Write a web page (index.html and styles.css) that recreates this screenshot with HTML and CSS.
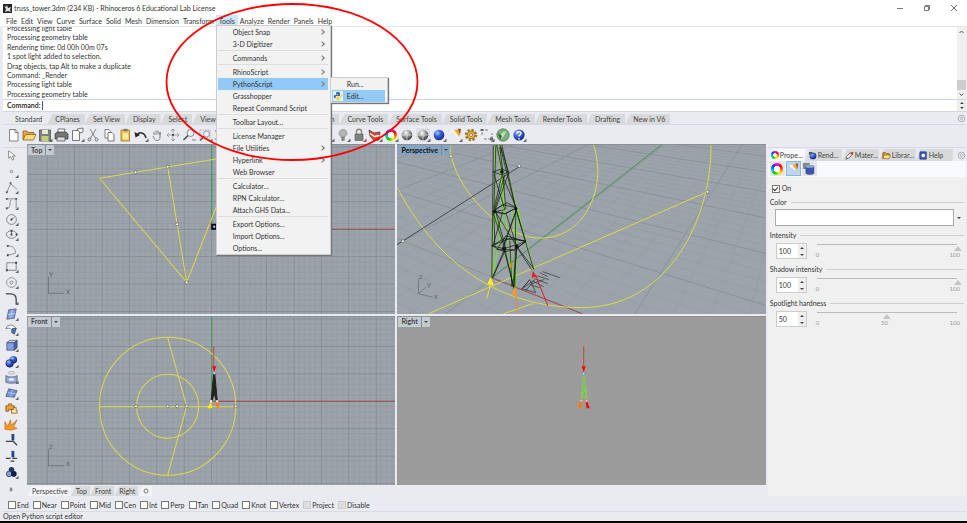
FILE: index.html
```html
<!DOCTYPE html>
<html lang="en">
<head>
<meta charset="utf-8">
<title>truss_tower.3dm - Rhinoceros 6</title>
<link rel="stylesheet" href="styles.css">
</head>
<body>
<svg class="defs" aria-hidden="true">
  <defs>
    <radialGradient id="gBlue" cx=".35" cy=".3" r=".8"><stop offset="0" stop-color="#a9c4ff"/><stop offset=".4" stop-color="#3a63d8"/><stop offset="1" stop-color="#0d1f6e"/></radialGradient>
    <radialGradient id="gGray" cx=".4" cy=".3" r=".8"><stop offset="0" stop-color="#fff"/><stop offset=".5" stop-color="#8c8c8c"/><stop offset="1" stop-color="#1b1b1b"/></radialGradient>
    <pattern id="gridTop" patternUnits="userSpaceOnUse" x="211" y="228" width="27.4" height="27.4">
      <path class="minor" d="M5.5 0V27.4M11 0V27.4M16.4 0V27.4M21.9 0V27.4M0 5.5H27.4M0 11H27.4M0 16.4H27.4M0 21.9H27.4"/>
      <path class="major" d="M.5 0V27.4M0 .5H27.4"/>
    </pattern>
    <pattern id="gridFront" patternUnits="userSpaceOnUse" x="211" y="399.5" width="27.4" height="27.4">
      <path class="minor" d="M5.5 0V27.4M11 0V27.4M16.4 0V27.4M21.9 0V27.4M0 5.5H27.4M0 11H27.4M0 16.4H27.4M0 21.9H27.4"/>
      <path class="major" d="M.5 0V27.4M0 .5H27.4"/>
    </pattern>
    <symbol id="corner" viewBox="0 0 16 16"><path d="M15.500 11.500v3.500h-3.500z" fill="#666"/></symbol>
    <symbol id="spot" viewBox="0 0 16 16"><path d="M3 4l6-1.500 3 8z" fill="#fdf6e4"/><path d="M7 3l6-1-.5 8z" fill="#f0a63c"/><path d="M11 1.500l3 .5-1 6z" fill="#8a5a2a"/></symbol>
  </defs>
</svg>

<header class="titlebar">
  <svg class="app-icon" viewBox="0 0 9 9"><rect width="9" height="9" fill="#222"/><path d="M1 2l2 1 1-2 1 3 3-1-1 3 1 2-3-1-3 1 1-3z" fill="#ddd"/></svg>
  <h1>truss_tower.3dm (234 KB) - Rhinoceros 6 Educational Lab License</h1>
  <div class="window-buttons">
    <button aria-label="Minimize"><svg viewBox="0 0 8 8"><path d="M1 4.500h6"/></svg></button>
    <button aria-label="Restore"><svg viewBox="0 0 8 8"><path d="M1.500 2.500h4v4h-4zM2.500 2.500v-1h4v4h-1"/></svg></button>
    <button aria-label="Close"><svg viewBox="0 0 8 8"><path d="M1 1l6 6M7 1l-6 6"/></svg></button>
  </div>
</header>

<nav class="menubar">
  <button>File</button><button>Edit</button><button>View</button><button>Curve</button><button>Surface</button><button>Solid</button><button>Mesh</button><button>Dimension</button><button>Transform</button>
  <div class="menu-host">
    <button class="open">Tools</button>
    <ul class="menu">
      <li><button class="sub">Object Snap</button></li>
      <li><button class="sub">3-D Digitizer</button></li>
      <li class="sep"><button class="sub">Commands</button></li>
      <li class="sep"><button class="sub">RhinoScript</button></li>
      <li class="sub-host"><button class="sub lit">PythonScript</button>
        <ul class="menu submenu">
          <li><button>Run...</button></li>
          <li><button class="lit"><svg class="py" viewBox="0 0 10 10"><path d="M5 1c-2 0-2 .6-2 1.800V3.500h2.500V4H2C1 4 .8 5 .8 5.800S1.200 7.200 2 7.200h.7V6c0-.8.500-1 1.300-1h2c.8 0 1-.5 1-1V2.500C7 1.300 6.500 1 5 1z" fill="#2f6cab"/><path d="M5.200 9.300c2 0 2-.6 2-1.800V6.800H4.700V6.300h3.500c1 0 1.200-1 1.200-1.800S9 3.200 8.200 3.200h-.7V4.400c0 .8-.5 1-1.300 1h-2c-.8 0-1 .5-1 1v1.500c0 1.100.5 1.400 2 1.400z" fill="#ffd040"/></svg>Edit...</button></li>
        </ul>
      </li>
      <li><button>Grasshopper</button></li>
      <li><button>Repeat Command Script</button></li>
      <li class="sep"><button>Toolbar Layout...</button></li>
      <li class="sep"><button>License Manager</button></li>
      <li><button class="sub">File Utilities</button></li>
      <li><button class="sub">Hyperlink</button></li>
      <li><button>Web Browser</button></li>
      <li class="sep"><button>Calculator...</button></li>
      <li><button>RPN Calculator...</button></li>
      <li><button>Attach GHS Data...</button></li>
      <li class="sep"><button>Export Options...</button></li>
      <li><button>Import Options...</button></li>
      <li><button>Options...</button></li>
    </ul>
  </div>
  <button>Analyze</button><button>Render</button><button>Panels</button><button>Help</button>
</nav>

<section class="console">
  <div class="history">
    <ol>
      <li>Processing light table</li><li>Processing geometry table</li><li>Rendering time: 0d 00h 00m 07s</li><li>1 spot light added to selection.</li><li>Drag objects, tap Alt to make a duplicate</li><li>Command: _Render</li><li>Processing light table</li><li>Processing geometry table</li>
    </ol>
    <div class="scrollbar"><svg viewBox="0 0 9 9"><path d="M2.500 6L4.500 4l2 2"/></svg><span class="thumb"></span><svg viewBox="0 0 9 9"><path d="M2.500 3.500l2 2 2-2"/></svg></div>
  </div>
  <div class="prompt">
    <label for="cmd">Command:</label><input id="cmd" type="text">
    <div class="steps"><button aria-label="Up"></button><button class="down" aria-label="Down"></button></div>
  </div>
</section>

<div class="tabs">
  <button class="active">Standard</button><button>CPlanes</button><button>Set View</button><button>Display</button><button>Select</button><button>Viewport Layout</button><button>Visibility</button><button>Transform</button><button>Curve Tools</button><button>Surface Tools</button><button>Solid Tools</button><button>Mesh Tools</button><button>Render Tools</button><button>Drafting</button><button>New in V6</button>
  <svg class="gear" viewBox="0 0 10 10"><circle cx="5" cy="5" r="3.700"/><circle cx="5" cy="5" r="1.500"/></svg>
</div>

<div class="toolbar">
  <button aria-label="New"><svg viewBox="0 0 16 16"><path d="M4.500 2.500h6l2.500 3v8.500H4.500z" fill="#fff" stroke="#555"/><path d="M10 2.500v3h3" fill="none" stroke="#555"/></svg></button>
  <button aria-label="Open"><svg viewBox="0 0 16 16"><path d="M2 13V4h4l1 1.500h6V8" fill="#e9a93a" stroke="#80550f"/><path d="M2 13l2.500-5.500H15L12.500 13z" fill="#ffd97a" stroke="#80550f"/></svg></button>
  <button aria-label="Save"><svg viewBox="0 0 16 16"><path d="M2.500 3h11v11h-11z" fill="#7a7f87" stroke="#444"/><path d="M5 3h6v4H5z" fill="#e6e9d0"/><path d="M4.500 9h7v5h-7z" fill="#c9cf6a"/><use href="#corner"/></svg></button>
  <button aria-label="Print"><svg viewBox="0 0 16 16"><path d="M5 6V2h7l-1 4" fill="#fff" stroke="#444"/><path d="M2 7l2-2h9l2 2v5H2z" fill="#777" stroke="#333"/><path d="M4 10h8v4H4z" fill="#ddd" stroke="#444"/></svg></button>
  <button aria-label="Document properties"><svg viewBox="0 0 16 16"><path d="M3.500 3.500h7v10h-7z" fill="#fff" stroke="#444"/><path d="M8 2l6-1v4l-3 1z" fill="#fff" stroke="#444"/><use href="#corner"/></svg></button>
  <button aria-label="Cut"><svg viewBox="0 0 16 16"><path d="M5 2l5.500 9M11 2L5.500 11" fill="none" stroke="#555"/><circle cx="4.500" cy="12.500" r="1.500" fill="none" stroke="#444"/><circle cx="11.500" cy="12.500" r="1.500" fill="none" stroke="#444"/></svg></button>
  <button aria-label="Copy"><svg viewBox="0 0 16 16"><path d="M4 2.500h4l1.500 2V11H4z" fill="#fff" stroke="#555"/><path d="M7 5.500h4l2 2V14H7z" fill="#fff" stroke="#444"/></svg></button>
  <button aria-label="Paste"><svg viewBox="0 0 16 16"><path d="M4 3h8.500v11H4z" fill="#f5c94b" stroke="#8c661a"/><path d="M6.500 1.800h4v2.500h-4z" fill="#777"/><path d="M6 6h5v6.500H6z" fill="#ffe9a0"/></svg></button>
  <button aria-label="Undo"><svg viewBox="0 0 16 16"><path class="bold" d="M4 8c3-4 8-2 9 3" fill="none" stroke="#222"/><path d="M1.500 5l1 5.500L7 8z" fill="#222"/><use href="#corner"/></svg></button>
  <button aria-label="Pan"><svg viewBox="0 0 16 16"><path d="M5 8V5M7 7.500V3.500M9 7.500V3.500M11 8V5v5c0 2-1 3.500-3 3.500s-3-2-4-4.500" fill="none" stroke="#555"/></svg></button>
  <button aria-label="Rotate"><svg viewBox="0 0 16 16"><path d="M8 2v12M2 8h12M6 4l2-2 2 2M6 12l2 2 2-2M4 6L2 8l2 2M12 6l2 2-2 2" fill="none" stroke="#888"/><circle cx="8" cy="8" r="1" fill="#333"/></svg></button>
  <button aria-label="Zoom"><svg viewBox="0 0 16 16"><circle cx="9.500" cy="6" r="3.500" fill="#eef" stroke="#666"/><path class="bold" d="M7 8.500L2.500 13" stroke="#444"/><path d="M11 13h4" stroke="#555"/></svg></button>
  <button aria-label="Zoom window"><svg viewBox="0 0 16 16"><path d="M3 3h10v8H3z" fill="none" stroke="#999" stroke-dasharray="1.500 1"/><circle cx="9.500" cy="7" r="3" fill="#eef" stroke="#777"/><path class="bold" d="M7 9.500L3 13.500" stroke="#555"/><use href="#corner"/></svg></button>
  <button aria-label="Zoom extents"><svg viewBox="0 0 16 16"><path d="M3 5V3h3M3 11v2h3M13 5V3h-3M13 11v2h-3M4 4l2 2M4 12l2-2" fill="none" stroke="#333"/><use href="#corner"/></svg></button>
  <button class="from-right" aria-label="Layers"><svg viewBox="0 0 16 16"><path d="M9 3h4v4H9z" fill="#f0c020"/><use href="#corner"/></svg></button>
  <button aria-label="Hide"><svg viewBox="0 0 16 16"><path d="M6 9.500C3 8 3.500 2.500 8 2.500s5 5.500 2 7z" fill="#b4b4b4" stroke="#888"/><path d="M6 10h4l-.5 4h-3z" fill="#8a8a8a"/><use href="#corner"/></svg></button>
  <button aria-label="Lock"><svg viewBox="0 0 16 16"><path class="bold" d="M5.500 7V4.500c0-3 5-3 5 0V7" fill="none" stroke="#888"/><path d="M4 7h8v6.500H4z" fill="#808080" stroke="#666"/><use href="#corner"/></svg></button>
  <button aria-label="Shade"><svg viewBox="0 0 16 16"><path d="M2 3l5 3 6-1-1 8-5 .5L3 9z" fill="#e34a2f" stroke="#333"/><path class="bold" d="M3 6.500l4.500 3 5-1" fill="none" stroke="#fff"/><use href="#corner"/></svg></button>
  <button aria-label="Color"><span class="wheel"></span><svg viewBox="0 0 16 16"><use href="#corner"/></svg></button>
  <button aria-label="Render"><svg viewBox="0 0 16 16"><circle cx="8" cy="8" r="5.300" fill="url(#gGray)"/><path d="M3 8h10M8 3v10" stroke="#ddd"/></svg></button>
  <button aria-label="Render preview"><svg viewBox="0 0 16 16"><path d="M2 2h12v12H2z" fill="none" stroke="#aaa" stroke-dasharray="1 1"/><circle cx="8" cy="8" r="5.300" fill="url(#gGray)"/><path d="M3 8h10M8 3v10" stroke="#ddd"/><use href="#corner"/></svg></button>
  <button aria-label="Material"><svg viewBox="0 0 16 16"><circle cx="8" cy="8" r="5.300" fill="url(#gBlue)"/><use href="#corner"/></svg></button>
  <button aria-label="Spotlight"><svg viewBox="0 0 16 16"><use href="#spot"/><use href="#corner"/></svg></button>
  <button aria-label="Options"><svg viewBox="0 0 16 16"><circle class="teeth" cx="8" cy="8" r="5" fill="none" stroke="#a0741e"/><circle cx="8" cy="8" r="4" fill="#e6b04a" stroke="#8a6116"/><circle cx="8" cy="8" r="1.500" fill="#fff" stroke="#8a6116"/></svg></button>
  <button aria-label="Dimension"><svg viewBox="0 0 16 16"><path d="M3 8V3h7M5 12h8V6" fill="none" stroke="#555" stroke-dasharray="3 1"/><path d="M1.500 2h3v2h-3zM11 10.500h3v3h-3z" fill="#666"/><use href="#corner"/></svg></button>
  <button aria-label="Grasshopper"><svg viewBox="0 0 16 16"><circle cx="8" cy="8" r="6.200" fill="#79b37a" stroke="#4c6b4d"/><path d="M4 11c1-4 4-6 7-7-1 3-2 6-5 8z" fill="#c4dfbd"/><path d="M3 6l4 3-2 4z" fill="#305f35"/></svg></button>
  <button aria-label="Help"><svg viewBox="0 0 16 16"><circle cx="8" cy="8" r="5.600" fill="url(#gBlue)"/><path class="bold" d="M6 6.500c0-2.500 4-2.500 4 0 0 1.500-2 1.300-2 3M8 11v1.500" fill="none" stroke="#fff"/><use href="#corner"/></svg></button>
</div>

<main class="workspace">
  <div class="sidebar">
    <button aria-label="Select"><svg viewBox="0 0 16 16"><path d="M5 3v8l2-2 2 4 1.500-1L9 8.500h3z" fill="#fff" stroke="#555"/></svg></button>
    <button aria-label="Point"><svg viewBox="0 0 16 16"><circle cx="8" cy="8" r="1.300" fill="none" stroke="#666"/><use href="#corner"/></svg></button>
    <button aria-label="Polyline"><svg viewBox="0 0 16 16"><path d="M3 13L7 4l7 6" fill="none" stroke="#666"/><path d="M6 2.500h2v2H6zM2 12h2v2H2z" fill="#666"/><use href="#corner"/></svg></button>
    <button aria-label="Curve"><svg viewBox="0 0 16 16"><path d="M4 3h9v10M4 13c4 0 1-9 4-9" fill="none" stroke="#666"/><path d="M2 2h2v2H2zM12 2h2v2h-2zM2 12h2v2H2z" fill="#555"/><use href="#corner"/></svg></button>
    <button aria-label="Circle"><svg viewBox="0 0 16 16"><circle cx="8" cy="8" r="5.200" fill="none" stroke="#555"/><path d="M8 8l3-2.500" stroke="#444"/><path d="M7 7h2v2H7z" fill="#333"/><use href="#corner"/></svg></button>
    <button aria-label="Ellipse"><svg viewBox="0 0 16 16"><ellipse cx="8" cy="8" rx="5.500" ry="4" fill="none" stroke="#555"/><path d="M8 8V4" stroke="#444"/><path d="M7 7h2v2H7zM7 3h2v2H7zM12.500 7h2v2h-2z" fill="#444"/><use href="#corner"/></svg></button>
    <button aria-label="Arc"><svg viewBox="0 0 16 16"><path d="M4 3c6 0 9 4 8 8M4 13l8-2" fill="none" stroke="#666"/><path d="M3 2h2v2H3zM3 12h2v2H3z" fill="#444"/><use href="#corner"/></svg></button>
    <button aria-label="Rectangle"><svg viewBox="0 0 16 16"><path d="M3 4h10v8H3z" fill="none" stroke="#555"/><path d="M2 11h2v2H2zM12 3h2v2h-2z" fill="#444"/><use href="#corner"/></svg></button>
    <button aria-label="Polygon"><svg viewBox="0 0 16 16"><path d="M6 3h4l3 3v4l-3 3H6l-3-3V6z" fill="none" stroke="#666"/><circle cx="8" cy="8" r="1.600" fill="none" stroke="#666"/><use href="#corner"/></svg></button>
    <button aria-label="Fillet"><svg viewBox="0 0 16 16"><path class="bold" d="M2 3h5c4 0 6 2 6 6v5" fill="none" stroke="#444"/><use href="#corner"/></svg></button>
    <button aria-label="Surface"><svg viewBox="0 0 16 16"><path d="M5 3l8-1-2 10-8 1z" fill="#7f9ceb" stroke="#444"/><path d="M4 8l8-1M9 3L7 12" stroke="#dfe6ff"/><use href="#corner"/></svg></button>
    <button aria-label="Sweep"><svg viewBox="0 0 16 16"><path d="M2 7c2-5 8-5 11 0l-4 4c0-4-3-5-7-4z" fill="#fff" stroke="#444"/><path d="M9 7h4l-2 6-3-2z" fill="#4a73d8" stroke="#333"/><use href="#corner"/></svg></button>
    <button aria-label="Box"><svg viewBox="0 0 16 16"><path d="M3 5l3-2.500h8L11 5z" fill="#c0cefa" stroke="#444"/><path d="M3 5h8v8H3z" fill="#7f9cf0" stroke="#444"/><path d="M11 5l3-2.500v8L11 13z" fill="#3c5fc2" stroke="#444"/><use href="#corner"/></svg></button>
    <button aria-label="Boolean"><svg viewBox="0 0 16 16"><circle cx="10" cy="6" r="4" fill="url(#gBlue)"/><circle cx="6" cy="10" r="4" fill="url(#gBlue)" stroke="#223"/><use href="#corner"/></svg></button>
    <button aria-label="Project"><svg viewBox="0 0 16 16"><ellipse cx="8" cy="3" rx="3.500" ry="1.500" fill="none" stroke="#999"/><path d="M2 6c3 2 9 2 12 0v7c-3 1.500-9 1.500-12 0z" fill="#8fa8ea" stroke="#444"/><ellipse cx="8" cy="10" rx="3" ry="1.300" fill="#fff"/><use href="#corner"/></svg></button>
    <button aria-label="Mesh"><svg viewBox="0 0 16 16"><path d="M5 3l9 2-3 7-9-1z" fill="#6f8fe4" stroke="#444"/><path d="M4 7l9 1.500M9 4l-2 8" stroke="#cfdcff"/><use href="#corner"/></svg></button>
    <button aria-label="Plugin"><svg viewBox="0 0 16 16"><path d="M2 5h3V3h3v2h3v6H8V9H5v2H2z" fill="#f0a030" stroke="#70440a"/><path d="M8 9h2V7h3v3h1v3H8z" fill="#f9e2a5" stroke="#70440a"/></svg></button>
    <button aria-label="Explode"><svg viewBox="0 0 16 16"><path d="M1 13l0-8 3 5 3-7 .5 6L14 3l-4 8 4 1-6 2z" fill="#f59a23" stroke="#c65d14"/></svg></button>
    <button aria-label="Trim"><svg viewBox="0 0 16 16"><path d="M8 1h3v7H8z" fill="#24448f"/><path class="bold" d="M2 9h8M10 9l4 4" stroke="#444"/></svg></button>
    <button aria-label="Split"><svg viewBox="0 0 16 16"><path d="M8 2h3v7H8z" fill="#24448f"/><path class="bold" d="M2 10h5M9 10h5M7 13h4" stroke="#444"/></svg></button>
    <button aria-label="Group"><svg viewBox="0 0 16 16"><circle cx="8" cy="5" r="3" fill="#24356f"/><circle cx="5.500" cy="9.500" r="3" fill="#8ba1dc" stroke="#222"/><circle cx="10.500" cy="9.500" r="3" fill="#16204a"/><use href="#corner"/></svg></button>
    <button class="more">»</button>
  </div>

  <div class="center">
    <div class="viewports">
      <section class="view">
        <svg class="scene" viewBox="27 144 368 169" preserveAspectRatio="xMidYMid slice">
          <path fill="url(#gridTop)" d="M0 100h500v250H0z"/>
          <path class="axis-y" d="M211.500 100v128"/><path class="axis-x" d="M211.500 228.500h300"/>
          <path class="light" d="M99.500 177.500L217 158M99.500 177.500L186.500 281.500 167.500 166M186.500 281.500L220 196"/>
          <g class="grip"><circle cx="135.500" cy="171.500" r="1.500"/><circle cx="167.500" cy="166" r="1.500"/><circle cx="177" cy="223.500" r="1.500"/><circle cx="186.500" cy="281.500" r="1.500"/></g>
          <path d="M210 222v8" stroke="#f06030" stroke-width="1" stroke-dasharray="2 2"/>
          <path d="M211 223h6v6h-6z" fill="#06062a"/><path d="M213 225h2v2h-2z" fill="#ccf"/>
          <path class="triad" d="M48.500 276v16.500H64"/><text class="triad-text" x="49" y="275">y</text><text class="triad-text" x="66" y="293">x</text>
        </svg>
        <div class="view-title"><button>Top</button><button class="drop" aria-label="Top view menu"></button></div>
      </section>
      <section class="view">
        <svg class="scene" id="persp" viewBox="397 144 369 169" preserveAspectRatio="xMidYMid slice">
          <g id="persp-grid"></g>
          <path class="axis-y" d="M492 277L662 144"/><path class="axis-x" d="M491.500 277L582 313"/>
          <g class="light"><path d="M397.500 187C425 240 480 307 582 307C668 307 712 220 711.500 144"/><path d="M450 144C452 190 505 238 541 237.500C580 237 600 200 598 165Q597 152 594 144"/><path d="M708 191L429 313M504 313l29-10"/></g>
          <path d="M397 244l123-78.500" stroke="#333" stroke-width=".8"/>
          <g class="grip"><circle cx="451" cy="155.500" r="1.500"/><circle cx="708" cy="191" r="1.500"/><circle cx="403" cy="240.500" r="1.500"/><circle cx="519.500" cy="165" r="1.500"/></g>
          <g class="tower-fill"><path d="M495 144l-2 133M498 144l16 144M500 144l34 125M494 210l10 36 12 40 1-78M503 172l1 36-11 69M501 172v36M512 208l4 38-2 40M518 208l8 34"/></g>
          <g class="tower-edge"><path d="M493.500 144l-1.500 133M496 144l-2 66 1 36M497 144l6 30 3 34M500 144l16 64-1 78M502 144l14 64 18 61M493 171l9-3 7 3-7 3zM493 211l10-7 14 3-12 6zM493 210l12 3 12-6-10-5zM492 245l12-7 22 2-10 9-12 2zM492 245l20-8 14 4-22 7zM497 249l9-14 20 6-12 8z"/><path d="M494 173l11 36-12 2 12 37-13 30M509 172l-14 38 22 36M505 174l-10 34 11 40-13 29M504 248l10 38 3-40 17 22M506 212l11 34-4 40M503 176l14 32-14 38M505 248l9 40M517 208l-13 38M500 146l3 25-9 37M516 208l10 33M501 146l8 26M493 245l10-34M510 240l2 46M518 248l14 21"/></g>
          <g class="knots"><circle cx="502" cy="171" r="1.800"/><circle cx="495" cy="211" r="1.500"/><circle cx="516" cy="208" r="1.500"/><circle cx="504" cy="248" r="2"/><circle cx="517" cy="246" r="2"/></g>
          <path d="M522 289l8-10M530 279l6 13-14-4zM524 287l11-8M526 290l8-10M532 283l12-4M534 281l10 5M535 278l13 5M537 275l12 4M540 272l8 4M543 271l17 6M530 284l10 3" fill="none" stroke="#333" stroke-width=".7"/>
          <path d="M491 277l2 7-5-1z" fill="#ffee20" stroke="#ffee20"/><path d="M491 283l-4 15" stroke="#e8dc30"/>
          <path d="M515 287l1.500 7h-4z" fill="#ff9820" stroke="#ff9820"/><path d="M516 294l2 19" stroke="#f28a20"/><path d="M510 262h2v5h-2z" fill="#d08a20"/>
          <path d="M533 270l4 6-5 1z" fill="#f01818"/><path d="M536 275l12 30" stroke="#e02020"/>
          <path class="triad" d="M418.500 278v15l14 3.500M418.500 293l8-7"/><text class="triad-text" x="419" y="278">z</text><text class="triad-text" x="427" y="286">y</text><text class="triad-text" x="434" y="298">x</text>
        </svg>
        <div class="view-title current"><button>Perspective</button><button class="drop" aria-label="Perspective view menu"></button></div>
      </section>
      <section class="view">
        <svg class="scene" viewBox="27 315 368 170" preserveAspectRatio="xMidYMid slice">
          <path fill="url(#gridFront)" d="M0 280h500v250H0z"/>
          <path class="axis-y" d="M211.500 280v119"/><path class="axis-x" d="M211.500 400h300"/>
          <g class="light"><ellipse cx="167.500" cy="405" rx="68" ry="69"/><ellipse cx="167.500" cy="405" rx="31" ry="32"/><path d="M99 405.500h137M167.500 336.500l19 68.500-19 69"/></g>
          <g class="grip"><circle cx="136" cy="405" r="1.500"/><circle cx="167.500" cy="405" r="1.500"/><circle cx="177" cy="405" r="1.500"/><circle cx="186.500" cy="405" r="1.500"/><circle cx="235.500" cy="405" r="1.500"/></g>
          <path d="M213.500 345v20" stroke="#d04040"/><path d="M212 365h4l-2 6z" fill="#f00"/>
          <path d="M213.500 372h1l2.500 27h-1l-2-7-2 7h-1z" fill="#222" stroke="#222"/>
          <path d="M211 400l1 7h-5z" fill="#ffee00"/><path d="M215 401h4l-1 8z" fill="#ff7a10"/><path d="M210 399h2v2h-2zM216 399h2v2h-2z" fill="#fff"/><path d="M213 371h2v2h-2z" fill="#c9c9ff"/>
          <path class="triad" d="M48.500 448v16.500H64"/><text class="triad-text" x="49" y="448">z</text><text class="triad-text" x="66" y="465">x</text>
        </svg>
        <div class="view-title"><button>Front</button><button class="drop" aria-label="Front view menu"></button></div>
      </section>
      <section class="view plain">
        <svg class="scene" viewBox="397 315 369 170" preserveAspectRatio="xMidYMid slice">
          <path d="M584 345v20" stroke="#c84040"/><path d="M582 365h4l-2 6z" fill="#f00"/>
          <path d="M583.500 374l-2 25M584.500 374l3 25M583 384l4 10-5 3M586 384l-3 10 4 4" stroke="#78d83c" fill="none"/>
          <path d="M580 401h3l-2 6h-3z" fill="#ff7a10"/><path d="M586 401h2l2 6h-3z" fill="#f00"/><path d="M580.500 398.500h2v2h-2zM586 398.500h2v2h-2z" fill="#fff" stroke="#d55" stroke-width=".5"/><path d="M583 371.500h2v2h-2z" fill="#fff" stroke="#66c" stroke-width=".5"/>
        </svg>
        <div class="view-title"><button>Right</button><button class="drop" aria-label="Right view menu"></button></div>
      </section>
    </div>
    <div class="view-tabs"><button class="active">Perspective</button><button>Top</button><button>Front</button><button>Right</button><button class="active add" aria-label="Add view"><svg viewBox="0 0 6 6"><circle cx="3" cy="3" r="2"/></svg></button></div>
  </div>

  <aside class="panel">
    <div class="panel-tabs">
      <button class="active"><span class="wheel small"></span>Prope...</button>
      <button><svg viewBox="0 0 10 10"><circle cx="5.500" cy="5.500" r="3.800" fill="url(#gBlue)"/><path d="M1 1h4v3H1z" fill="#555"/></svg>Rend...</button>
      <button><svg viewBox="0 0 10 10"><path d="M1 9l1-3 4-4 2 2-4 4z" fill="#fff" stroke="#555"/><path d="M5.500 2.500l2.500 2L9.500 2 8 .8z" fill="#c0392b"/></svg>Mater...</button>
      <button><svg viewBox="0 0 10 10"><path d="M1 8.500V2h3l1 1h3v1.500" fill="#e9a93a" stroke="#80550f"/><path d="M1 8.500l1.500-4H9.500L8 8.500z" fill="#ffe28a" stroke="#80550f" stroke-width=".7"/></svg>Librar...</button>
      <button><svg viewBox="0 0 10 10"><path d="M1 1h7v8H1z" fill="#4060c8" stroke="#223a80"/><circle cx="4.800" cy="5" r="2" fill="#fff"/></svg>Help</button>
      <svg class="gear" viewBox="0 0 10 10"><circle cx="5" cy="5" r="3.700"/><circle cx="5" cy="5" r="1.500"/></svg>
    </div>
    <div class="panel-modes">
      <button aria-label="Object"><span class="wheel"></span></button>
      <button class="chosen" aria-label="Light"><svg viewBox="0 0 16 16"><use href="#spot"/></svg></button>
      <button aria-label="Texture"><svg viewBox="0 0 16 16"><path d="M1 1h8v7H1z" fill="#888"/><path d="M4 5c2-2 8-2 10 0v8c-2 2-8 2-10 0z" fill="#3d57a8"/><ellipse cx="9" cy="5" rx="5" ry="1.600" fill="#93a6dc"/></svg></button>
    </div>
    <div class="props">
      <label class="on"><input type="checkbox" checked>On</label>
      <h2>Color</h2>
      <div class="color-row"><button class="swatch" aria-label="Light color"></button><button class="drop" aria-label="Choose color"></button></div>
      <h2><label for="in1">Intensity</label></h2>
      <div class="amount"><div class="spin"><input id="in1" type="text" value="100"><div class="steps"><button aria-label="More"></button><button class="down" aria-label="Less"></button></div></div>
        <div class="slide"><input type="range" value="100" aria-label="Intensity"><div class="scale"><span>0</span><span>100</span></div></div></div>
      <h2><label for="in2">Shadow intensity</label></h2>
      <div class="amount"><div class="spin"><input id="in2" type="text" value="100"><div class="steps"><button aria-label="More"></button><button class="down" aria-label="Less"></button></div></div>
        <div class="slide"><input type="range" value="100" aria-label="Shadow intensity"><div class="scale"><span>0</span><span>100</span></div></div></div>
      <h2><label for="in3">Spotlight hardness</label></h2>
      <div class="amount"><div class="spin"><input id="in3" type="text" value="50"><div class="steps"><button aria-label="More"></button><button class="down" aria-label="Less"></button></div></div>
        <div class="slide"><input type="range" value="50" aria-label="Spotlight hardness"><div class="scale"><span>0</span><span>50</span><span>100</span></div></div></div>
    </div>
  </aside>
</main>

<div class="osnap">
  <label><input type="checkbox">End</label><label><input type="checkbox">Near</label><label><input type="checkbox">Point</label><label><input type="checkbox">Mid</label><label><input type="checkbox">Cen</label><label><input type="checkbox">Int</label><label><input type="checkbox">Perp</label><label><input type="checkbox">Tan</label><label><input type="checkbox">Quad</label><label><input type="checkbox">Knot</label><label><input type="checkbox">Vertex</label><label><input type="checkbox" disabled>Project</label><label><input type="checkbox" disabled>Disable</label>
</div>
<footer class="status">Open Python script editor</footer>

<svg class="callout" viewBox="0 0 254 160" aria-hidden="true"><ellipse cx="127" cy="80" rx="125.500" ry="78"/></svg>
<script src="grid.js"></script>
</body>
</html>
```
FILE: styles.css
```css
* { box-sizing: border-box; }
html { height: 100%; }
body {
  margin: 0; min-height: 100%; position: relative; overflow: hidden;
  display: flex; flex-direction: column;
  background: #e9ebf0; color: #333;
  font: 7px/9px Lato, "Open Sans", sans-serif;
}
button, input { font: inherit; color: inherit; border: 0; padding: 0; margin: 0; background: none; border-radius: 0; }
ul, ol { list-style: none; margin: 0; padding: 0; }
h1, h2 { font: inherit; margin: 0; }
svg { display: block; }
.defs { position: absolute; width: 0; height: 0; }

.titlebar { display: flex; align-items: center; gap: 2px; height: 15px; padding: 1px 9px 0 3px; background: #fff; }
.app-icon { width: 9px; height: 9px; }
.window-buttons { display: flex; gap: 19px; margin-left: auto; }
.window-buttons svg { width: 8px; height: 8px; fill: none; stroke: #777; stroke-width: 1; }

.menubar { display: flex; height: 11px; padding-left: 4px; background: #fff; }
.menubar > button, .menu-host > button { display: block; height: 11px; padding: 0 2px; line-height: 10px; }
.menu-host { position: relative; }
.menu-host > .open { padding: 0 3px; background: #cce8ff; }
.menu {
  position: absolute; z-index: 3; left: 0; top: 10px; width: 115px; padding: 0 2px 0 1px;
  background: #f2f2f2; border: 1px solid #ccc; box-shadow: 1px 1px 1px #777;
}
.menu button { display: block; width: 100%; height: 12px; padding-left: 15px; line-height: 11px; text-align: left; }
.menu .sep { border-top: 1px solid #ddd; padding-top: 1px; }
.menu .lit { background: #91c9f7; }
.menu .sub { position: relative; }
.menu .sub::after { content: ""; position: absolute; right: 4px; top: 4px; width: 3px; height: 3px; border: solid #777; border-width: 1px 1px 0 0; transform: rotate(45deg); }
.sub-host { position: relative; }
.menu .submenu { left: 112px; top: -1px; width: 58px; }
.submenu .lit { position: relative; }
.py { position: absolute; left: 1px; top: 1px; width: 10px; height: 10px; background: #e4f1fb; }

.console { margin: 0 1px 0 3px; background: #fff; border-top: 1px solid #e6e6e6; }
.history { display: flex; height: 72px; overflow: hidden; }
.history ol { flex: 1; display: grid; grid-auto-rows: 1fr; height: 75px; align-self: flex-end; padding-left: 4px; }
.scrollbar { display: flex; flex-direction: column; width: 9px; background: #f0f0f0; }
.scrollbar svg { width: 9px; height: 9px; fill: none; stroke: #555; }
.scrollbar .thumb { flex: none; height: 10px; margin-top: auto; background: #cdcdcd; }
.prompt { display: flex; align-items: center; height: 12px; padding-left: 4px; border-top: 1px solid #c9d6e2; }
.prompt label { font-weight: 700; }
.prompt input { flex: 1; height: 9px; margin-left: 1px; border-left: 1px solid #555; outline: 0; }
.steps { display: flex; flex-direction: column; width: 9px; align-self: stretch; background: #eee; }
.steps button, .drop { flex: 1; display: grid; place-items: center; }
.steps button::after, .drop::after { content: ""; border: 2px solid transparent; border-top: 0; border-bottom-color: #444; }
.steps .down::after, .drop::after { border: 2px solid transparent; border-bottom: 0; border-top-color: #444; }

.tabs { display: flex; height: 14px; margin: 0 1px 0 3px; padding: 2px 0 0 4px; border-top: 1px solid #d2d8e2; border-bottom: 1px solid #d6dae3; }
.tabs button, .view-tabs button, .panel-tabs button { background: #d8d9da; color: #444; clip-path: polygon(5px 0, 100% 0, 100% 100%, 0 100%); }
.tabs button { padding: 0 5px 0 8px; }
.tabs button.active { background: #e9ebf0; }
.gear { width: 9px; height: 9px; margin-left: auto; fill: none; stroke: #aaa; }

.toolbar { display: grid; grid-template-columns: repeat(33, 1fr); width: 54%; height: 19px; margin-left: 5px; align-items: center; }
.toolbar button, .sidebar button { position: relative; display: grid; place-items: center; }
.toolbar svg, .sidebar svg { grid-area: 1 / 1; stroke-width: .7; }
.toolbar svg { width: 16px; height: 16px; }
.sidebar svg { width: 15px; height: 15px; }
.bold { stroke-width: 1.4; }
.teeth { stroke-width: 2.4; stroke-dasharray: 2.2 1.7; }
.from-right { grid-column-start: 21; }
.wheel { grid-area: 1 / 1; display: block; width: 12px; height: 12px; border-radius: 50%; background: radial-gradient(#fff 0 35%, transparent 38%), conic-gradient(#f0f, #f00, #ff8000, #ff0, #0c0, #0cc, #03f, #f0f); }
.wheel.small { width: 8px; height: 8px; flex: none; }

.workspace { flex: 1; display: flex; min-height: 0; }
.sidebar { flex: none; width: 24px; margin: 3px 0 1px 3px; padding-right: 8px; display: grid; grid-auto-rows: 1fr; min-height: 0; border-top: 1px solid #d8dbe0; }
.sidebar button { min-height: 0; }
.more { font-size: 9px; }
.center { flex: 1; display: flex; flex-direction: column; min-width: 0; }
.viewports { flex: 1; display: grid; grid-template: 1fr 1fr / 1fr 1fr; gap: 2px; min-height: 0; background: #e9ebf0; }
.view { position: relative; min-height: 0; overflow: hidden; background: #9ca3aa; border-top: 1px solid #8a9098; }
.view.plain { background: #9b9b9b; }
.scene { position: absolute; inset: 0; width: 100%; height: 100%; }
.view-title { position: absolute; left: 1px; top: 0; display: flex; height: 10px; background: #c4cad2; color: #444; font-weight: 700; }
.view-title.current { background: #86a3c2; color: #111; }
.view-title button { padding: 0 3px; line-height: 9px; }
.view-title .drop { width: 9px; padding: 0; border-left: 1px solid #888; }
.minor { stroke: #949ba2; stroke-width: 1; fill: none; }
.major { stroke: #878e96; stroke-width: 1; fill: none; }
.persp-minor { stroke: #969da4; stroke-width: .7; }
.persp-major { stroke: #8b9299; stroke-width: 1; }
.axis-x { stroke: #a04850; fill: none; }
.axis-y { stroke: #3f9850; fill: none; }
.light { stroke: #dcd94a; fill: none; stroke-width: 1; }
.grip { fill: #fff; stroke: #444; stroke-width: .6; }
.tower-fill { fill: none; stroke: #7ed843; stroke-width: 1.2; }
.tower-edge { fill: none; stroke: #10180c; stroke-width: .7; }
.knots { fill: #10180c; }
.triad { stroke: #737a82; fill: none; }
.triad-text { fill: #646b73; font-size: 8px; }

.view-tabs { display: flex; height: 12px; padding: 1px 0; }
.view-tabs button { padding: 0 3px 0 5px; }
.view-tabs .active { background: #f3f4f8; }
.view-tabs svg { width: 6px; height: 6px; fill: none; stroke: #777; }

.panel { flex: none; width: 20.5%; min-width: 190px; margin: 3px 1px 1px 2px; display: flex; flex-direction: column; background: #f0f0f0; border-top: 1px solid #d4daea; }
.panel-tabs { display: flex; align-items: center; height: 13px; padding-top: 1px; background: #e9ebf0; }
.panel-tabs button { flex: 0 1 37px; display: flex; align-items: center; gap: 1px; height: 12px; padding-left: 3px; white-space: nowrap; }
.panel-tabs button.active { background: #f8f9fc; }
.panel-tabs button svg { flex: none; width: 9px; height: 9px; }
.panel-modes { display: flex; gap: 1px; height: 16px; padding-left: 2px; background: #f8f9fc; }
.panel-modes button { display: grid; place-items: center; width: 15px; height: 15px; background: #e4e5e8; }
.panel-modes .chosen { background: #bcd8f0; outline: 1px solid #8fb4d8; outline-offset: -1px; }
.panel-modes svg { width: 14px; height: 14px; }
.props { padding: 7px 2px 0; }
.on { display: flex; align-items: center; gap: 2px; height: 9px; padding-left: 2px; }
input[type="checkbox"] { appearance: none; flex: none; width: 8px; height: 8px; border: 1px solid #777; background: #fff; display: grid; place-items: center; }
input[type="checkbox"]:checked::after { content: ""; width: 2px; height: 4px; border: solid #333; border-width: 0 1px 1px 0; transform: rotate(45deg); }
input[type="checkbox"]:disabled { border-color: #ccc; background: #ddd; }
.props h2 { display: flex; align-items: center; gap: 4px; height: 9px; margin-top: 5px; }
.props h2::after { content: ""; flex: 1; height: 1px; background: #cfcfcf; }
.color-row { display: flex; margin: 2px 0 5px 5px; }
.swatch { flex: 1; height: 17px; background: #fff; border: 1px solid #aaa; }
.color-row .drop { flex: none; width: 10px; }
.amount { display: flex; align-items: flex-start; gap: 5px; margin: 3px 2px 0 6px; height: 16px; }
.amount + h2 { margin-top: 6px; }
.spin { display: flex; width: 31px; height: 16px; background: #fff; border: 1px solid #ccc; }
.spin input { flex: 1; min-width: 0; padding-left: 2px; outline: 0; }
.spin .steps { width: 8px; }
.slide { flex: 1; }
.slide input { appearance: none; display: block; width: 100%; height: 8px; background: linear-gradient(#bbb, #bbb) 5px 1px / calc(100% - 10px) 1px no-repeat; }
.slide input::-webkit-slider-thumb { appearance: none; width: 8px; height: 5px; margin-top: 3px; background: #c4c4c4; clip-path: polygon(50% 0, 100% 100%, 0 100%); }
.scale { display: flex; justify-content: space-between; padding: 0 2px 0 4px; font-size: 6px; color: #999; line-height: 8px; }

.osnap { display: flex; gap: 4px; align-items: center; height: 15px; margin: 0 1px 0 3px; padding: 2px 5px 0; border-bottom: 1px solid #d8dbe2; }
.osnap label { display: flex; align-items: center; gap: 1px; }
.status { height: 11px; padding: 0 3px; line-height: 9px; border-bottom: 2px solid #050505; }

.callout { position: absolute; z-index: 5; left: 165px; top: 2px; width: 254px; height: 160px; pointer-events: none; }
.callout ellipse { fill: none; stroke: #f00; stroke-width: 1.8; }
```
FILE: grid.js
```js
// Construction plane grid of the perspective view, from its two vanishing points.
const origin = [493.3, 276.8];
const vanishX = [-90, 40];
const vanishY = [819, 24];
const stepX = 0.0367;
const stepY = 0.038;
const grid = document.getElementById('persp-grid');

function point(u, v) {
  const a = -stepX * u;
  const b = stepY * v;
  const w = 1 + a + b;
  return [0, 1].map(i => (origin[i] + a * vanishX[i] + b * vanishY[i]) / w);
}

function extend(p, q) {
  const dx = q[0] - p[0];
  const dy = q[1] - p[1];
  const k = 1500 / Math.hypot(dx, dy);
  return [p[0] - dx * k, p[1] - dy * k, p[0] + dx * k, p[1] + dy * k];
}

function add(ends, major) {
  const line = document.createElementNS('http://www.w3.org/2000/svg', 'line');
  ['x1', 'y1', 'x2', 'y2'].forEach((name, i) => line.setAttribute(name, ends[i]));
  line.setAttribute('class', major ? 'persp-major' : 'persp-minor');
  grid.appendChild(line);
}

for (let i = -30; i <= 22; i++) add(extend(point(i, 0), vanishY), i % 5 === 0);
for (let i = -8; i <= 40; i++) add(extend(point(0, i), vanishX), i % 5 === 0);
```
